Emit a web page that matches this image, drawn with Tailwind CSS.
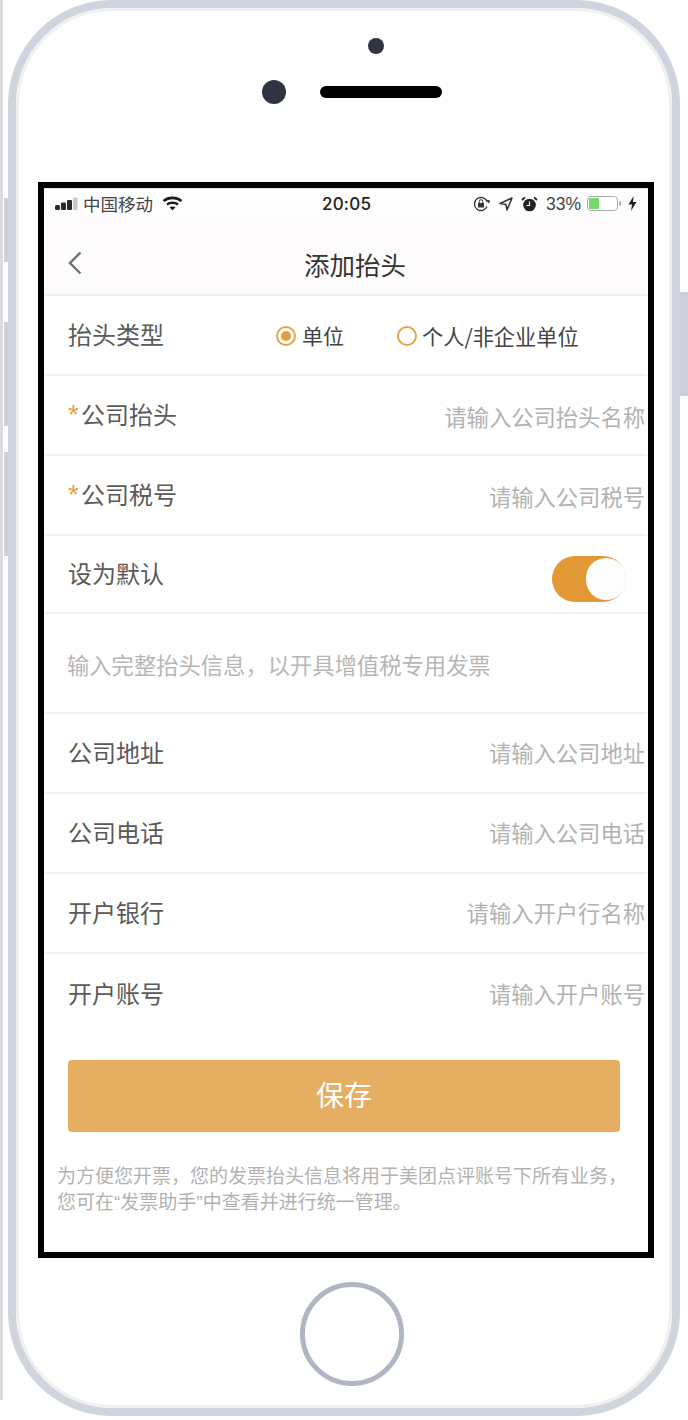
<!DOCTYPE html>
<html lang="zh-CN">

<head>
  <meta charset="UTF-8">
  <meta name="viewport" content="width=device-width, initial-scale=1.0">
  <title>添加抬头</title>
  <script src="https://cdn.jsdelivr.net/npm/@tailwindcss/browser@4"></script>
</head>

<body class="relative h-[1420px] w-[688px] overflow-hidden bg-white [font-family:'Noto_Sans_CJK_SC','Noto_Sans',sans-serif]">
  <!-- edge stripe and side buttons -->
  <div class="absolute left-0 top-0 h-[1400px] w-[3px] bg-[#dcdcdc]"></div>
  <div class="absolute left-[4px] top-[198px] h-[64px] w-[6px] bg-[#ced1dc]"></div>
  <div class="absolute left-[4px] top-[322px] h-[104px] w-[6px] bg-[#ced1dc]"></div>
  <div class="absolute left-[4px] top-[452px] h-[104px] w-[6px] bg-[#ced1dc]"></div>
  <div class="absolute left-[678px] top-[292px] h-[104px] w-[10px] bg-[#ced1dc]"></div>

  <!-- phone body -->
  <div class="relative ml-[8px] h-[1416px] w-[672px] rounded-[104px] border-8 border-[#d0d4de] bg-white">
    <div class="h-full w-full rounded-[96px] border-[3px] border-[#f0f0f0]">
      <div class="ml-[349px] mt-[27px] h-4 w-4 rounded-full bg-[#2f3440]"></div>
      <div class="ml-[243px] mt-[26px] flex items-center gap-[34px]">
        <div class="h-6 w-6 rounded-full bg-[#2f3440]"></div>
        <div class="h-3 w-[122px] rounded-full bg-black"></div>
      </div>

      <!-- screen -->
      <div class="ml-[19px] mt-[78px] h-[1076px] w-[616px] border-[6px] border-black bg-white">
        <!-- status bar -->
        <div class="relative flex h-[30px] items-center border-t border-[#e4e4e4] bg-[#fdfdfd] text-[#333]">
          <svg class="ml-[11px] h-[14px] w-[23px]" viewBox="0 0 23 14">
            <rect x="0" y="8" width="5" height="5" rx="1.500" fill="#2a2a2a" />
            <rect x="6" y="5.500" width="5" height="7.500" rx="1" fill="#2a2a2a" />
            <rect x="12" y="3" width="5" height="10" rx="1" fill="#2a2a2a" />
            <rect x="18" y="0.500" width="4.500" height="12.500" rx="1" fill="#c9c9c9" />
          </svg>
          <span class="ml-[5px] text-[17.500px] leading-[30px] text-[#444]">中国移动</span>
          <svg class="ml-[9px] h-[15px] w-[21px]" viewBox="0 0 21 15" fill="none" stroke="#1c1c1c" stroke-width="2.600">
            <path d="M1.500 5C6.500 0.800 14.500 0.800 19.500 5" />
            <path d="M5 8.500C8 6.200 13 6.200 16 8.500" />
            <path d="M10.500 14.500L7.500 11.200C9.300 10.100 11.700 10.100 13.500 11.200Z" fill="#1c1c1c" stroke="none" />
          </svg>
          <span class="absolute left-[278px] top-0 text-[17px] font-medium leading-[30px] tracking-[0.2px] [font-family:'Inter',sans-serif] text-[#222]">20:05</span>
          <div class="ml-auto mr-[11px] flex items-center">
            <svg class="h-[16px] w-[17px]" viewBox="0 0 17 16" fill="none" stroke="#333" stroke-width="1.300">
              <path d="M14 10.500A6.500 6.500 0 1 1 14 5.500" />
              <path d="M13 3.500l2.500 4 2-3z" fill="#333" stroke="none" />
              <rect x="5" y="7" width="6" height="4.500" fill="#333" stroke="none" />
              <path d="M6.200 7V5.500a1.800 1.800 0 0 1 3.600 0V7" stroke-width="1" />
            </svg>
            <svg class="ml-[9px] h-[14px] w-[14px]" viewBox="0 0 14 14" fill="none" stroke="#333" stroke-width="1.500" stroke-linejoin="round">
              <path d="M13 1L1 6.500L7 7.500L8 13Z" />
            </svg>
            <svg class="ml-[8px] h-[16px] w-[17px]" viewBox="0 0 17 16">
              <circle cx="8.500" cy="9" r="6.300" fill="#222" />
              <path d="M8.500 5.500V9.500H5.500" fill="none" stroke="#fff" stroke-width="1.200" />
              <path d="M1 4L4 1.300M16 4L13 1.300" stroke="#222" stroke-width="1.800" />
            </svg>
            <span class="ml-[8px] text-[17.500px] leading-[30px] [font-family:'Liberation_Sans',sans-serif] text-[#444]">33%</span>
            <svg class="ml-[6px] h-[15px] w-[34px]" viewBox="0 0 34 15">
              <rect x="0.500" y="0.500" width="30" height="14" rx="3.500" fill="#fff" stroke="#aaa" />
              <rect x="2" y="2" width="10" height="11" rx="1" fill="#74d96f" />
              <path d="M32.500 5.500a3 3 0 0 1 0 4" fill="none" stroke="#888" stroke-width="1.200" />
            </svg>
            <svg class="ml-[7px] h-[15px] w-[9px]" viewBox="0 0 9 15">
              <path d="M5.500 0L0.500 8.500H4L3 15L8.500 6H5Z" fill="#222" />
            </svg>
          </div>
        </div>

        <!-- nav -->
        <div class="relative mx-px flex h-[78px] items-center justify-center border-b-2 border-[#f0eff0] bg-[#fdfbfc]">
          <svg class="absolute left-[23px] top-[33px] h-[24px] w-[14px]" viewBox="0 0 14 24" fill="none" stroke="#707070" stroke-width="2.400">
            <path d="M12.500 1.500L2 12L12.500 22.500" />
          </svg>
          <span class="ml-[18px] mt-[16px] text-[25.500px] leading-[36px] text-[#333]">添加抬头</span>
        </div>

        <!-- first group -->
        <div class="mx-px flex h-[80px] items-center border-b-2 border-[#f0f0f0] pl-[23px] pt-[2px]">
          <span class="w-[208px] pb-[4px] text-[24px] text-[#5a5a5a]">抬头类型</span>
          <span class="flex h-[20px] w-[20px] items-center justify-center rounded-full border-2 border-[#e5a445]">
            <span class="h-[10px] w-[10px] rounded-full bg-[#e29f3b]"></span>
          </span>
          <span class="ml-[6px] text-[21px] text-[#444]">单位</span>
          <span class="ml-[53px] h-[20px] w-[20px] rounded-full border-2 border-[#e5a445]"></span>
          <span class="ml-[5px] text-[21.200px] text-[#444]">个人/非企业单位</span>
        </div>
        <div class="mx-px flex h-[80px] items-center justify-between border-b-2 border-[#f0f0f0] pl-[23px] pr-[2px] pt-[2px]">
          <span class="pb-[4px] text-[24px] text-[#5a5a5a]"><span class="mr-[2px] text-[28px] leading-none text-[#e5a445] [font-family:'Liberation_Sans',sans-serif]">*</span>公司抬头</span>
          <span class="pt-[2px] text-[22.300px] text-[#b2b2b2]">请输入公司抬头名称</span>
        </div>
        <div class="mx-px flex h-[80px] items-center justify-between border-b-2 border-[#f0f0f0] pl-[23px] pr-[2px] pt-[2px]">
          <span class="pb-[4px] text-[24px] text-[#5a5a5a]"><span class="mr-[2px] text-[28px] leading-none text-[#e5a445] [font-family:'Liberation_Sans',sans-serif]">*</span>公司税号</span>
          <span class="pt-[2px] text-[22.300px] text-[#b2b2b2]">请输入公司税号</span>
        </div>
        <div class="mx-px flex h-[78px] items-center justify-between border-b-2 border-[#f0f0f0] pl-[23px] pr-[21px] pt-[2px]">
          <span class="pb-[4px] text-[24px] text-[#5a5a5a]">设为默认</span>
          <span class="mt-[8px] flex h-[46px] w-[74px] items-center justify-end rounded-full bg-[#e29935]">
            <span class="h-[42px] w-[40px] rounded-full bg-[#fdfdfd]"></span>
          </span>
        </div>

        <!-- hint -->
        <div class="mx-px flex h-[100px] items-center border-b-2 border-[#f0f0f0] pl-[22px] pt-[4px] text-[22.300px] text-[#b6b6b6]">输入完整抬头信息，以开具增值税专用发票</div>

        <!-- second group -->
        <div class="mx-px flex h-[80px] items-center justify-between border-b-2 border-[#f0f0f0] pl-[23px] pr-[2px] pt-[2px]">
          <span class="pb-[4px] text-[24px] text-[#5a5a5a]">公司地址</span>
          <span class="pb-[2px] text-[22.300px] text-[#b2b2b2]">请输入公司地址</span>
        </div>
        <div class="mx-px flex h-[80px] items-center justify-between border-b-2 border-[#f0f0f0] pl-[23px] pr-[2px] pt-[2px]">
          <span class="pb-[4px] text-[24px] text-[#5a5a5a]">公司电话</span>
          <span class="pb-[2px] text-[22.300px] text-[#b2b2b2]">请输入公司电话</span>
        </div>
        <div class="mx-px flex h-[80px] items-center justify-between border-b-2 border-[#f0f0f0] pl-[23px] pr-[2px] pt-[2px]">
          <span class="pb-[4px] text-[24px] text-[#5a5a5a]">开户银行</span>
          <span class="pb-[2px] text-[22.300px] text-[#b2b2b2]">请输入开户行名称</span>
        </div>
        <div class="mx-px flex h-[80px] items-center justify-between pl-[23px] pr-[2px] pt-[2px]">
          <span class="pb-[4px] text-[24px] text-[#5a5a5a]">开户账号</span>
          <span class="pb-[2px] text-[22.300px] text-[#b2b2b2]">请输入开户账号</span>
        </div>

        <!-- save -->
        <button class="ml-[24px] mt-[26px] block h-[72px] w-[552px] rounded-[4px] bg-[#e6ae62] pb-[4px] text-[28px] text-white">保存</button>
        <p class="ml-[13px] mt-[30px] w-[590px] text-[19px] leading-[26px] text-[#b2b2b2]">为方便您开票，您的发票抬头信息将用于美团点评账号下所有业务，<br>您可在<span class="[font-family:'Liberation_Sans',sans-serif]">“</span>发票助手<span class="[font-family:'Liberation_Sans',sans-serif]">”</span>中查看并进行统一管理。</p>
      </div>

      <!-- home button -->
      <div class="ml-[281px] mt-[24px] h-[104px] w-[104px] rounded-full border-[5px] border-[#b0b5c4]"></div>
    </div>
  </div>
</body>

</html>
